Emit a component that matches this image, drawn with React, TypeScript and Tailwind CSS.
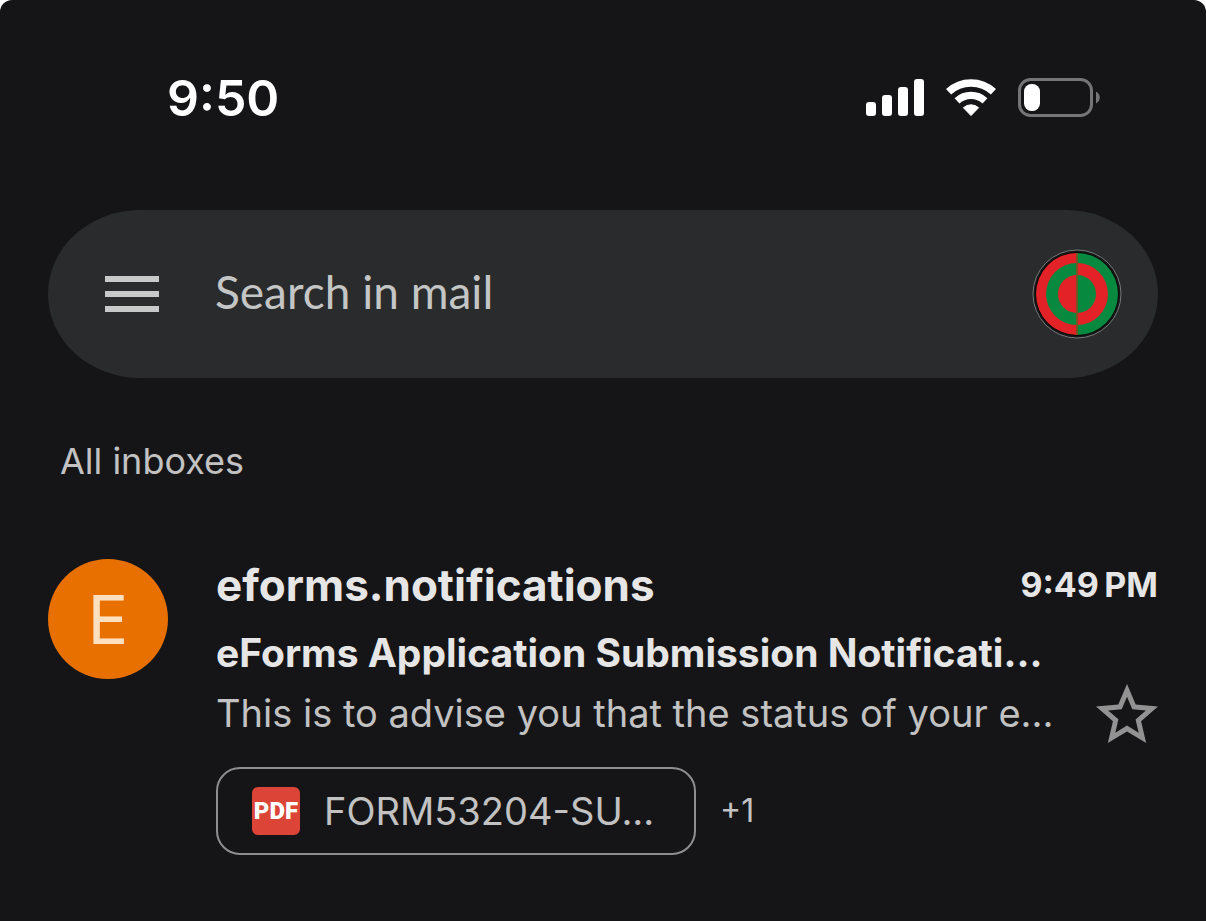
import React from "react";
import { clsx } from "clsx";

interface Mail {
  id: string;
  initial: string;
  sender: string;
  time: string;
  subject: string;
  preview: string;
  attachment: string;
  more: number;
}

const mails: Mail[] = [
  {
    id: "eforms",
    initial: "E",
    sender: "eforms.notifications",
    time: "9:49\u202fPM",
    subject: "eForms Application Submission Notificati...",
    preview: "This is to advise you that the status of your e...",
    attachment: "FORM53204-SU...",
    more: 1,
  },
];

function SignalIcon() {
  return (
    <svg viewBox="0 0 58 38" className="h-[38px] w-[58px]" fill="#fff">
      <rect x="0" y="23" width="10" height="14" rx="3" />
      <rect x="16" y="16" width="10" height="21" rx="3" />
      <rect x="32" y="8" width="10" height="29" rx="3" />
      <rect x="48" y="0" width="10" height="37" rx="3" />
    </svg>
  );
}

function WifiIcon() {
  return (
    <svg viewBox="0 0 50 38" className="h-[38px] w-[50px]">
      <path d="M2.6 12.7a33 33 0 0 1 44.8 0" fill="none" stroke="#fff" strokeWidth="7.5" />
      <path d="M11 21.9a20.6 20.6 0 0 1 28 0" fill="none" stroke="#fff" strokeWidth="7.2" />
      <path
        d="M17.4 28.7a11.4 11.4 0 0 1 15.2 0L25 36.6z"
        fill="#fff"
        stroke="#fff"
        strokeLinejoin="round"
      />
    </svg>
  );
}

function BatteryIcon() {
  return (
    <svg viewBox="0 0 82 40" className="h-10 w-[82px]">
      <rect x="1.5" y="1.5" width="72" height="36" rx="11" fill="none" stroke="#757577" strokeWidth="3" />
      <rect x="6" y="6" width="16" height="27" rx="7.5" fill="#fff" />
      <path d="M78 13.5c5 2.500 5 9.500 0 12z" fill="#757577" />
    </svg>
  );
}

function MenuIcon() {
  return (
    <svg viewBox="0 0 54 36" className="h-9 w-[54px]" fill="#c8cac9">
      <rect width="54" height="6" />
      <rect y="15" width="54" height="6" />
      <rect y="30" width="54" height="6" />
    </svg>
  );
}

function AccountBadge() {
  return (
    <svg viewBox="0 0 90 90" className="size-[90px]">
      <circle cx="45" cy="45" r="44" fill="#171718" stroke="#77797a" />
      <circle cx="45" cy="45" r="42" fill="#080a09" />
      <path d="M45 4a41 41 0 0 0 0 82z" fill="#e32227" />
      <path d="M45 4a41 41 0 0 1 0 82z" fill="#078940" />
      <path d="M45 14a31 31 0 0 0 0 62z" fill="#078940" />
      <path d="M45 14a31 31 0 0 1 0 62z" fill="#e32227" />
      <path d="M45 26a19 19 0 0 0 0 38z" fill="#e32227" />
      <path d="M45 26a19 19 0 0 1 0 38z" fill="#078940" />
      <path d="M45 4v82" stroke="#765322" strokeWidth="2" />
    </svg>
  );
}

function StarIcon({ filled }: { filled: boolean }) {
  return (
    <svg viewBox="2 2 20 19" className="h-[59px] w-[62px]" fill="#929292">
      <path
        d={clsx(
          "M22 9.24l-7.19-.62L12 2 9.19 8.63 2 9.24l5.46 4.73L5.82 21 12 17.27 18.18 21l-1.63-7.03L22 9.24z",
          !filled &&
            "M12 15.4l-3.76 2.27 1-4.28-3.32-2.88 4.38-.38L12 6.1l1.71 4.04 4.38.38-3.32 2.88 1 4.28L12 15.4z",
        )}
        fillRule="evenodd"
      />
    </svg>
  );
}

function PdfIcon() {
  return (
    <span className="flex size-12 shrink-0 items-center justify-center rounded-md bg-[#dc4437] font-['Roboto',sans-serif] text-2xl leading-none font-black text-white">
      PDF
    </span>
  );
}

function StatusBar() {
  return (
    <header className="flex h-[78px] items-center justify-between pr-[58px] pl-[119px]">
      <time className="text-[50px] leading-[60px] font-semibold text-white">
        9:50
      </time>
      <div className="flex items-center gap-[22px]">
        <SignalIcon />
        <WifiIcon />
        <BatteryIcon />
      </div>
    </header>
  );
}

function SearchBar() {
  return (
    <form
      role="search"
      onSubmit={(e) => e.preventDefault()}
      className="mt-[73px] flex h-[168px] items-center rounded-[92px/84px] bg-[#292b2c] pr-9 pl-[57px]"
    >
      <button type="button" aria-label="Menu">
        <MenuIcon />
      </button>
      <input
        type="search"
        aria-label="Search in mail"
        placeholder="Search in mail"
        className="ml-14 min-w-0 flex-1 bg-transparent pb-1 font-['Lato',sans-serif] text-[46px] leading-[60px] text-[#c8c8c8] outline-none placeholder:text-[#c4c5c5]"
      />
      <button type="button" aria-label="Account">
        <AccountBadge />
      </button>
    </form>
  );
}

function MailRow({ mail }: { mail: Mail }) {
  const [starred, setStarred] = React.useState(false);

  return (
    <li className="flex items-start gap-12">
      <div className="flex size-[120px] shrink-0 items-center justify-center rounded-full bg-[#e87000] text-[68px] leading-none text-[#fde0bf]">
        {mail.initial}
      </div>
      <div className="min-w-0 flex-1">
        <div className="flex items-center justify-between">
          <h2 className="text-[44px] leading-[52px] font-bold text-[#e6e6e6]">
            {mail.sender}
          </h2>
          <time className="text-[34px] leading-[48px] font-bold text-[#e6e6e6]">
            {mail.time}
          </time>
        </div>
        <div className="mt-4 flex items-end justify-between">
          <div className="min-w-0 whitespace-nowrap">
            <h3 className="text-[39px] leading-[52px] font-bold text-[#e6e6e6]">
              {mail.subject}
            </h3>
            <p className="mt-1 text-[38px] leading-[60px] text-[#c2c2c2]">
              {mail.preview}
            </p>
          </div>
          <button
            type="button"
            aria-label="Star"
            aria-pressed={starred}
            onClick={() => setStarred(!starred)}
          >
            <StarIcon filled={starred} />
          </button>
        </div>
        <div className="mt-6 flex items-center gap-6 text-[#c2c2c2]">
          <button
            type="button"
            className="flex h-[88px] w-[480px] items-center gap-6 rounded-3xl border-2 border-[#8e8e8e] px-[34px] text-[38px] whitespace-nowrap"
          >
            <PdfIcon />
            {mail.attachment}
          </button>
          <span className="text-[32px]">+{mail.more}</span>
        </div>
      </div>
    </li>
  );
}

export default function App() {
  return (
    <div className="min-h-screen rounded-t-xl bg-[#151517] px-12 pt-[59px] font-['Inter',sans-serif]">
      <StatusBar />
      <main>
        <SearchBar />
        <h1 className="mt-[59px] pl-3 text-[36px] leading-[48px] text-[#c2c2c2]">
          All inboxes
        </h1>
        <ul className="mt-[74px]">
          {mails.map((mail) => (
            <MailRow key={mail.id} mail={mail} />
          ))}
        </ul>
      </main>
    </div>
  );
}
